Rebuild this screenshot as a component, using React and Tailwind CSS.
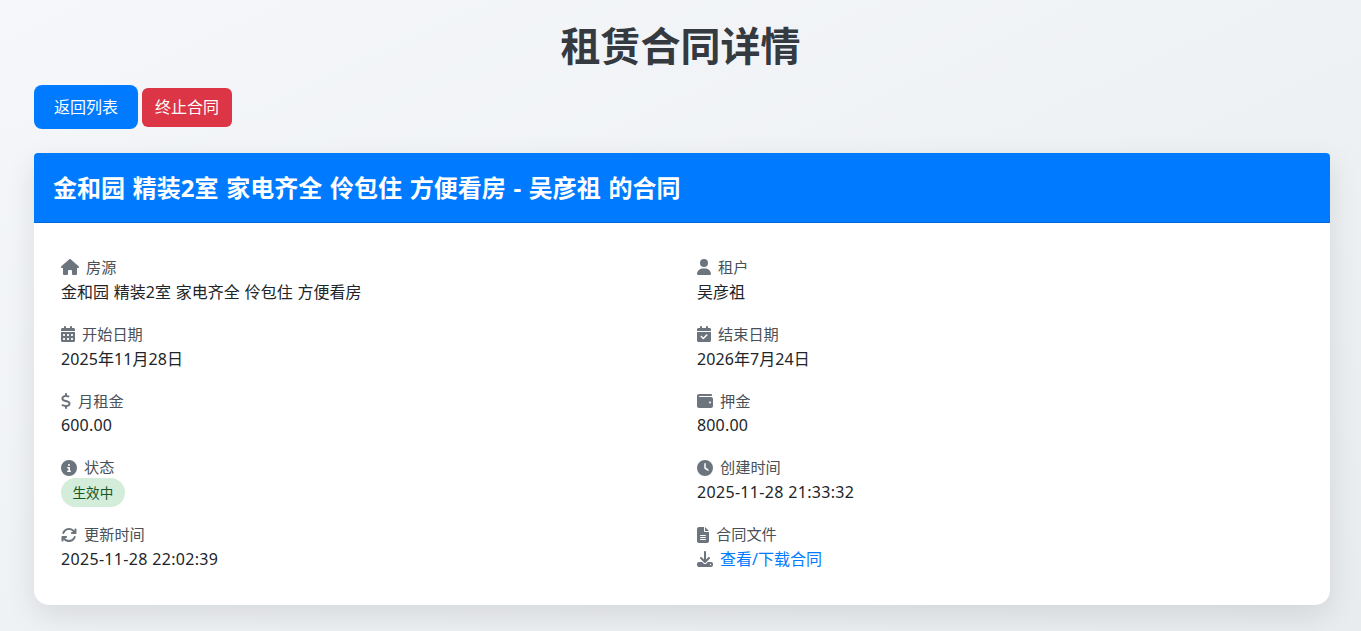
import React from 'react';
import {
  FaHouse, FaUser, FaCalendarDays, FaCalendarCheck, FaDollarSign, FaWallet,
  FaCircleInfo, FaClock, FaArrowsRotate, FaFileLines, FaDownload,
} from 'react-icons/fa6';

const fontStack = 'font-["Noto_Sans","Noto_Sans_CJK_SC",sans-serif]';

const Field = ({ icon: Icon, iconClass, label, valueClass = '', rowClass = 'mb-[19px]', children }) => (
  <div className={`px-[15px] ${rowClass}`}>
    <div className="flex items-center gap-[7px] h-[22.8px] text-[15.2px] text-[#495057]">
      <Icon className={`text-[#6c757d] h-4 shrink-0 ${iconClass}`} />
      <span>{label}</span>
    </div>
    <div className={`mt-px text-[16px] leading-6 text-[#212529] ${valueClass}`}>{children}</div>
  </div>
);

const App = () => {
  return (
    <div className={`${fontStack} min-h-[631px] bg-linear-to-br from-[#f5f7fa] to-[#e9ecef] pt-[22px] pb-[26px]`}>
      <h1 className="text-center text-[40px] leading-[48px] font-bold text-[#343a40] mb-[15px]">租赁合同详情</h1>

      <div className="pl-[34px] pr-[31px]">
        <div className="flex items-center gap-1 mb-6">
          <button className="h-11 w-[104px] rounded-lg bg-[#007bff] text-white text-[16px]">返回列表</button>
          <button className="h-[39px] w-[90px] rounded-md bg-[#dc3545] text-white text-[16px]">终止合同</button>
        </div>

        <div className="bg-white rounded-t-[4px] rounded-b-[15px] shadow-[0_10px_30px_rgba(0,0,0,0.1)]">
          <div className="h-[70px] flex items-center pl-[19px] bg-[#007bff] rounded-t-[4px] border-b border-[#0069d9]">
            <h2 className="text-[24px] font-bold text-white [word-spacing:1.5px]">金和园 精装2室 家电齐全 伶包住 方便看房 - 吴彦祖 的合同</h2>
          </div>
          <div className="px-3 pt-[33px] pb-[13px] grid grid-cols-2">
            <Field icon={FaHouse} iconClass="w-[18px]" label="房源" valueClass="[word-spacing:0.7px]">金和园 精装2室 家电齐全 伶包住 方便看房</Field>
            <Field icon={FaUser} iconClass="w-[14px]" label="租户">吴彦祖</Field>
            <Field icon={FaCalendarDays} iconClass="w-[14px]" label="开始日期" valueClass="tracking-[0.08px]">2025年11月28日</Field>
            <Field icon={FaCalendarCheck} iconClass="w-[14px]" label="结束日期" valueClass="tracking-[0.08px]">2026年7月24日</Field>
            <Field icon={FaDollarSign} iconClass="w-[10px]" label="月租金" valueClass="tracking-[0.16px]">600.00</Field>
            <Field icon={FaWallet} iconClass="w-4" label="押金" valueClass="tracking-[0.16px]">800.00</Field>
            <Field icon={FaCircleInfo} iconClass="w-4" label="状态" rowClass="mb-[18.2px]">
              <span className="px-[11.5px] py-[5px] rounded-full bg-[#d4edda] text-[#155724] text-[13.6px]">生效中</span>
            </Field>
            <Field icon={FaClock} iconClass="w-4" label="创建时间" valueClass="tracking-[0.32px]" rowClass="mb-[18.2px]">2025-11-28 21:33:32</Field>
            <Field icon={FaArrowsRotate} iconClass="w-4" label="更新时间" valueClass="tracking-[0.32px]">2025-11-28 22:02:39</Field>
            <Field icon={FaFileLines} iconClass="w-3" label="合同文件">
              <a href="#" className="inline-flex items-center gap-[7px] text-[#007bff]">
                <FaDownload className="text-[#6c757d] w-4 h-4" />
                查看/下载合同
              </a>
            </Field>
          </div>
        </div>
      </div>
    </div>
  );
};

export default App;
